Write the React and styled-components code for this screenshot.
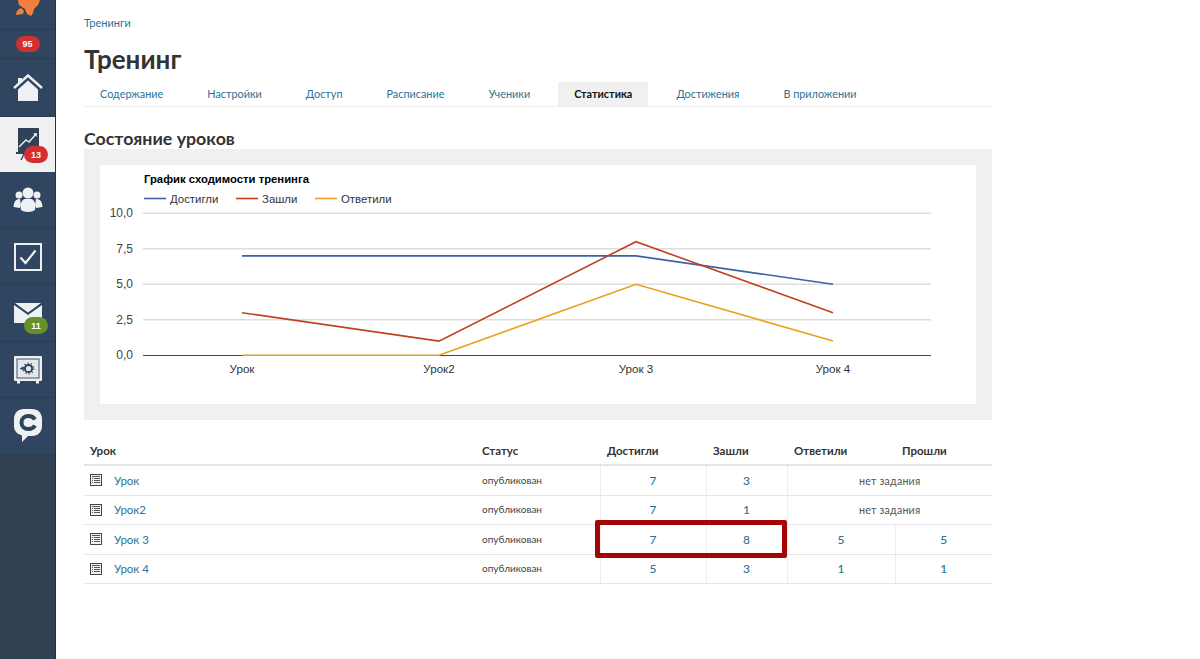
import React from 'react'
import styled, { createGlobalStyle } from 'styled-components'

const GlobalStyle = createGlobalStyle`
  html, body { margin: 0; padding: 0; height: 100%; background: #fff; }
  body { font-family: Lato, "Open Sans", "Noto Sans", sans-serif; color: #333; overflow: hidden; }
`

const Page = styled.div`
  display: flex;
  height: 659px;
  width: 1200px;
`

const Sidebar = styled.nav`
  width: 56px;
  flex: none;
  display: flex;
  flex-direction: column;
  background: #2f4560;
  border-right: 1px solid #26333f;
  box-sizing: border-box;
`

const NavTop = styled.div`
  height: 29px;
  overflow: hidden;
  border-bottom: 1px solid #2a3c50;
`

const NavBadgeRow = styled.div`
  height: 28px;
  display: flex;
  align-items: center;
  justify-content: center;
  border-bottom: 1px solid #2a3c50;
`

const NavItem = styled.a`
  position: relative;
  height: ${p => p.$h || 56}px;
  display: flex;
  align-items: center;
  justify-content: center;
  background: ${p => (p.$active ? '#f0f0f0' : 'transparent')};
  border-bottom: 1px solid ${p => (p.$active ? '#f0f0f0' : '#2a3c50')};
  box-sizing: border-box;
`

const Spacer = styled.div`
  flex: 1;
  background: #2f4153;
`

const Badge = styled.span`
  display: inline-flex;
  align-items: center;
  justify-content: center;
  background: ${p => p.$color || '#d32f2f'};
  color: #fff;
  font-family: "Liberation Sans", sans-serif;
  font-size: 9px;
  font-weight: 700;
  height: ${p => p.$h || 17}px;
  min-width: 24px;
  border-radius: 9px;
`

const FloatBadge = styled(Badge)`
  position: absolute;
  left: 24px;
  top: ${p => p.$top}px;
`

const Main = styled.main`
  width: 908px;
  margin-left: 28px;
  position: relative;
`

const Breadcrumb = styled.a`
  display: block;
  padding-top: 16px;
  font-size: 11px;
  line-height: 13px;
  color: #2a7396;
`

const Title = styled.h1`
  margin: 15px 0 0;
  font-size: 26px;
  line-height: 30px;
  font-weight: 700;
  color: #333;
`

const Tabs = styled.div`
  display: flex;
  height: 24px;
  margin-top: 8px;
  border-bottom: 1px solid #eee;
`

const Tab = styled.a`
  padding: 0 16px;
  margin-right: 12px;
  font-size: 10.85px;
  line-height: 24px;
  color: ${p => (p.$active ? '#111' : '#2a7396')};
  font-weight: ${p => (p.$active ? 700 : 400)};
  background: ${p => (p.$active ? '#f0f0f0' : 'transparent')};
`

const Heading = styled.h2`
  margin: 21px 0 0;
  font-size: 17.8px;
  line-height: 20px;
  font-weight: 700;
  color: #333;
`

const ChartPanel = styled.div`
  margin-top: 1px;
  padding: 16px;
  background: #f0f0f0;
`

const ChartBox = styled.div`
  background: #fff;
  height: 239px;
`

const ChartSvg = styled.svg`
  display: block;
  width: 875px;
  height: 239px;
  font-family: "Liberation Sans", Arial, sans-serif;
`

const Table = styled.table`
  width: 908px;
  margin-top: 17px;
  border-collapse: collapse;
  table-layout: fixed;
`

const Th = styled.th`
  text-align: left;
  padding: 0 7px 1px;
  height: 26px;
  font-size: 11.5px;
  font-weight: 700;
  color: #333;
  border-bottom: 2px solid #e4e4e4;
  vertical-align: middle;
  &:first-child { padding-left: 6px; }
`

const Td = styled.td`
  height: ${p => p.$h || 29}px;
  padding: 0 7px;
  font-size: 12px;
  border-bottom: 1px solid #e6e6e6;
  border-left: ${p => (p.$line ? '1px solid #eee' : 'none')};
  text-align: ${p => (p.$center ? 'center' : 'left')};
  box-sizing: border-box;
  &:first-child { padding-left: 6px; }
`

const LessonCell = styled.div`
  display: flex;
  align-items: center;
  gap: 12px;
`

const LessonLink = styled.a`
  font-size: 11.5px;
  color: #2a7396;
`

const Status = styled.span`
  font-size: 10px;
  color: #444;
  position: relative;
  top: -1px;
`

const Num = styled.a`
  font-size: 12px;
  font-weight: 500;
  color: #2a7396;
`

const NoTask = styled.span`
  font-size: 10.7px;
  letter-spacing: 0.2px;
  color: #555;
`

const Highlight = styled.div`
  position: absolute;
  left: 511px;
  top: 520px;
  width: 192px;
  height: 38px;
  border: 5px solid #a30606;
  border-radius: 2px;
  box-sizing: border-box;
`

const Rocket = () => (
  <svg width="56" height="29" viewBox="0 0 56 29" style={{ display: 'block' }}>
    <path d="M18 0 L40 0 L38 5 L34 9 L33 13 L31 16 L27 14 L25 9 L19 5Z" fill="#f47f3c" />
    <path d="M21 8 L24 11 L23 14 L16 15 C16 12 18 9 21 8Z" fill="#f47f3c" />
  </svg>
)

const HomeIcon = () => (
  <svg width="30" height="28" viewBox="0 0 30 28">
    <path d="M1 14 L15 1.5 L29 14" fill="none" stroke="#eef1f4" strokeWidth="2.4" />
    <path d="M5 4 L9 4 L9 6.5 L5 10Z" fill="#eef1f4" />
    <path d="M5 15.5 L15 6.5 L25 15.5 L25 27 L5 27Z" fill="#eef1f4" />
  </svg>
)

const ChartIcon = () => (
  <svg width="24" height="34" viewBox="0 0 24 34">
    <rect x="2" y="1" width="21" height="24" fill="#2f4358" />
    <path d="M3 20 L10 13 L13 15 L20 7" fill="none" stroke="#f0f0f0" strokeWidth="1.4" />
    <path d="M17 6.5 L21 6 L20.5 10Z" fill="#f0f0f0" />
    <rect x="0" y="25" width="24" height="2" fill="#2f4358" />
    <path d="M8 27 L5 33" stroke="#2f4358" strokeWidth="1.4" />
  </svg>
)

const GroupIcon = () => (
  <svg width="30" height="26" viewBox="0 0 30 26">
    <circle cx="15" cy="6" r="5.5" fill="#eef1f4" />
    <circle cx="6" cy="8" r="3.5" fill="#eef1f4" />
    <circle cx="24" cy="8" r="3.5" fill="#eef1f4" />
    <path d="M0.5 20 C1 14 3 12 7 12 L8 18 L7 21Z" fill="#eef1f4" />
    <path d="M29.5 20 C29 14 27 12 23 12 L22 18 L23 21Z" fill="#eef1f4" />
    <path d="M8 23 C7 16 9 12.5 12 12 L18 12 C21 12.5 23 16 22 23 C19 25.5 11 25.5 8 23Z" fill="#eef1f4" />
  </svg>
)

const CheckIcon = () => (
  <svg width="28" height="28" viewBox="0 0 28 28">
    <rect x="1" y="1" width="26" height="26" fill="none" stroke="#eef1f4" strokeWidth="2" />
    <path d="M6.5 14.5 L11.5 20 L21.5 7.5" fill="none" stroke="#eef1f4" strokeWidth="2.2" />
  </svg>
)

const MailIcon = () => (
  <svg width="28" height="20" viewBox="0 0 28 20">
    <path d="M1 0 L27 0 L14 9.5Z" fill="#eef1f4" />
    <path d="M0 2 L14 12 L28 2 L28 20 L0 20Z" fill="#eef1f4" />
  </svg>
)

const SafeIcon = () => (
  <svg width="28" height="28" viewBox="0 0 28 28">
    <rect x="0" y="0" width="28" height="25" rx="1" fill="#eef1f4" />
    <rect x="2.5" y="2.5" width="23" height="20" fill="#3d5269" />
    <rect x="3.5" y="3.5" width="21" height="18" fill="#e4e8ec" />
    <circle cx="14.5" cy="12.5" r="3.6" fill="none" stroke="#2f4358" strokeWidth="2" />
    <circle cx="14.5" cy="12.5" r="5.4" fill="none" stroke="#2f4358" strokeWidth="1.1" strokeDasharray="1.4 2" />
    <path d="M6 12.5 L8 12.5 M8 11 L10 12.5 L8 14Z" stroke="#2f4358" strokeWidth="1" fill="#2f4358" />
    <rect x="3" y="25" width="3" height="2.5" fill="#eef1f4" />
    <rect x="22" y="25" width="3" height="2.5" fill="#eef1f4" />
  </svg>
)

const ChatIcon = () => (
  <svg width="28" height="34" viewBox="0 0 28 34">
    <path d="M10 0 L18 0 C24 0 28 4 28 10 L28 17 C28 23 24 27 18 27 L14 27 L8 33 L8 26.5 C3 25 0 22 0 17 L0 10 C0 4 4 0 10 0Z" fill="#eef1f4" />
    <path d="M21 10.5 C19.5 8 17 7 14.5 7 C10.5 7 7.5 9.5 7.5 13.5 C7.5 17.5 10.5 20 14.5 20 C17 20 19.5 19 21 16.5" fill="none" stroke="#2f4358" strokeWidth="4" />
  </svg>
)

const LessonIcon = () => (
  <svg width="12" height="12" viewBox="0 0 12 12" style={{ flex: 'none' }}>
    <rect x="0.5" y="0.5" width="11" height="11" fill="#f4f4f4" stroke="#444" />
    <path d="M2 2.5 H10 M4 4.5 H10 M4 6.5 H10 M4 8.5 H10 M2 4.5 H3 M2 6.5 H3 M2 8.5 H3" stroke="#555" />
  </svg>
)

const tabs = ['Содержание', 'Настройки', 'Доступ', 'Расписание', 'Ученики', 'Статистика', 'Достижения', 'В приложении']

const lessons = [
  { name: 'Урок', reached: 7, entered: 3, h: 30 },
  { name: 'Урок2', reached: 7, entered: 1, h: 29 },
  { name: 'Урок 3', reached: 7, entered: 8, answered: 5, passed: 5, h: 30 },
  { name: 'Урок 4', reached: 5, entered: 3, answered: 1, passed: 1, h: 29 },
]

const chartX = [142, 339, 536, 733]
const yOf = v => 190.3 - v * 14.2
const series = [
  { color: '#3b62a8', values: [7, 7, 7, 5] },
  { color: '#c0401f', values: [3, 1, 8, 3] },
  { color: '#e8a020', values: [0, 0, 5, 1] },
]
const ticks = [
  { v: 10, label: '10,0' },
  { v: 7.5, label: '7,5' },
  { v: 5, label: '5,0' },
  { v: 2.5, label: '2,5' },
]
const legend = [
  { x: 44, color: '#3b62a8', label: 'Достигли' },
  { x: 136, color: '#c0401f', label: 'Зашли' },
  { x: 215, color: '#e8a020', label: 'Ответили' },
]
const labels = ['Урок', 'Урок2', 'Урок 3', 'Урок 4']

function Chart() {
  return (
    <ChartSvg viewBox="0 0 875 239">
      <text x="44" y="18" fontSize="11.3" fontWeight="700" fill="#000">График сходимости тренинга</text>
      {legend.map(l => (
        <g key={l.label}>
          <line x1={l.x} x2={l.x + 22} y1="33.5" y2="33.5" stroke={l.color} strokeWidth="1.6" />
          <text x={l.x + 26} y="38" fontSize="11.4" fill="#333">{l.label}</text>
        </g>
      ))}
      {ticks.map(t => (
        <g key={t.v}>
          <line x1="43" x2="831" y1={yOf(t.v)} y2={yOf(t.v)} stroke="#ddd" strokeWidth="1.4" />
          <text x="33" y={yOf(t.v) + 4} fontSize="12" fill="#444" textAnchor="end">{t.label}</text>
        </g>
      ))}
      <text x="33" y="194" fontSize="12" fill="#444" textAnchor="end">0,0</text>
      <line x1="43" x2="831" y1="190.5" y2="190.5" stroke="#444" strokeWidth="1" />
      {series.map(s => (
        <polyline
          key={s.color}
          points={s.values.map((v, i) => `${chartX[i]},${yOf(v)}`).join(' ')}
          fill="none"
          stroke={s.color}
          strokeWidth="1.6"
        />
      ))}
      {labels.map((l, i) => (
        <text key={l} x={chartX[i]} y="208" fontSize="11.6" fill="#333" textAnchor="middle">{l}</text>
      ))}
    </ChartSvg>
  )
}

export default function App() {
  return (
    <Page>
      <GlobalStyle />
      <Sidebar>
        <NavTop><Rocket /></NavTop>
        <NavBadgeRow><Badge $h={16}>95</Badge></NavBadgeRow>
        <NavItem $h={58}><HomeIcon /></NavItem>
        <NavItem $active $h={55}>
          <ChartIcon />
          <FloatBadge $top={29}>13</FloatBadge>
        </NavItem>
        <NavItem $h={57}><GroupIcon /></NavItem>
        <NavItem $h={56}><CheckIcon /></NavItem>
        <NavItem $h={57}>
          <MailIcon />
          <FloatBadge $top={32} $color="#66902a">11</FloatBadge>
        </NavItem>
        <NavItem $h={56}><SafeIcon /></NavItem>
        <NavItem $h={57}><ChatIcon /></NavItem>
        <Spacer />
      </Sidebar>
      <Main>
        <Breadcrumb>Тренинги</Breadcrumb>
        <Title>Тренинг</Title>
        <Tabs>
          {tabs.map(t => (
            <Tab key={t} $active={t === 'Статистика'}>{t}</Tab>
          ))}
        </Tabs>
        <Heading>Состояние уроков</Heading>
        <ChartPanel>
          <ChartBox><Chart /></ChartBox>
        </ChartPanel>
        <Table>
          <colgroup>
            <col width="391" />
            <col width="125" />
            <col width="106" />
            <col width="81" />
            <col width="108" />
            <col width="97" />
          </colgroup>
          <thead>
            <tr>
              <Th>Урок</Th>
              <Th>Статус</Th>
              <Th>Достигли</Th>
              <Th>Зашли</Th>
              <Th>Ответили</Th>
              <Th>Прошли</Th>
            </tr>
          </thead>
          <tbody>
            {lessons.map(l => (
              <tr key={l.name}>
                <Td $h={l.h}>
                  <LessonCell><LessonIcon /><LessonLink>{l.name}</LessonLink></LessonCell>
                </Td>
                <Td><Status>опубликован</Status></Td>
                <Td $line $center><Num>{l.reached}</Num></Td>
                <Td $line $center><Num>{l.entered}</Num></Td>
                {l.answered ? (
                  <>
                    <Td $line $center><Num>{l.answered}</Num></Td>
                    <Td $line $center><Num>{l.passed}</Num></Td>
                  </>
                ) : (
                  <Td $line $center colSpan={2}><NoTask>нет задания</NoTask></Td>
                )}
              </tr>
            ))}
          </tbody>
        </Table>
        <Highlight />
      </Main>
    </Page>
  )
}
